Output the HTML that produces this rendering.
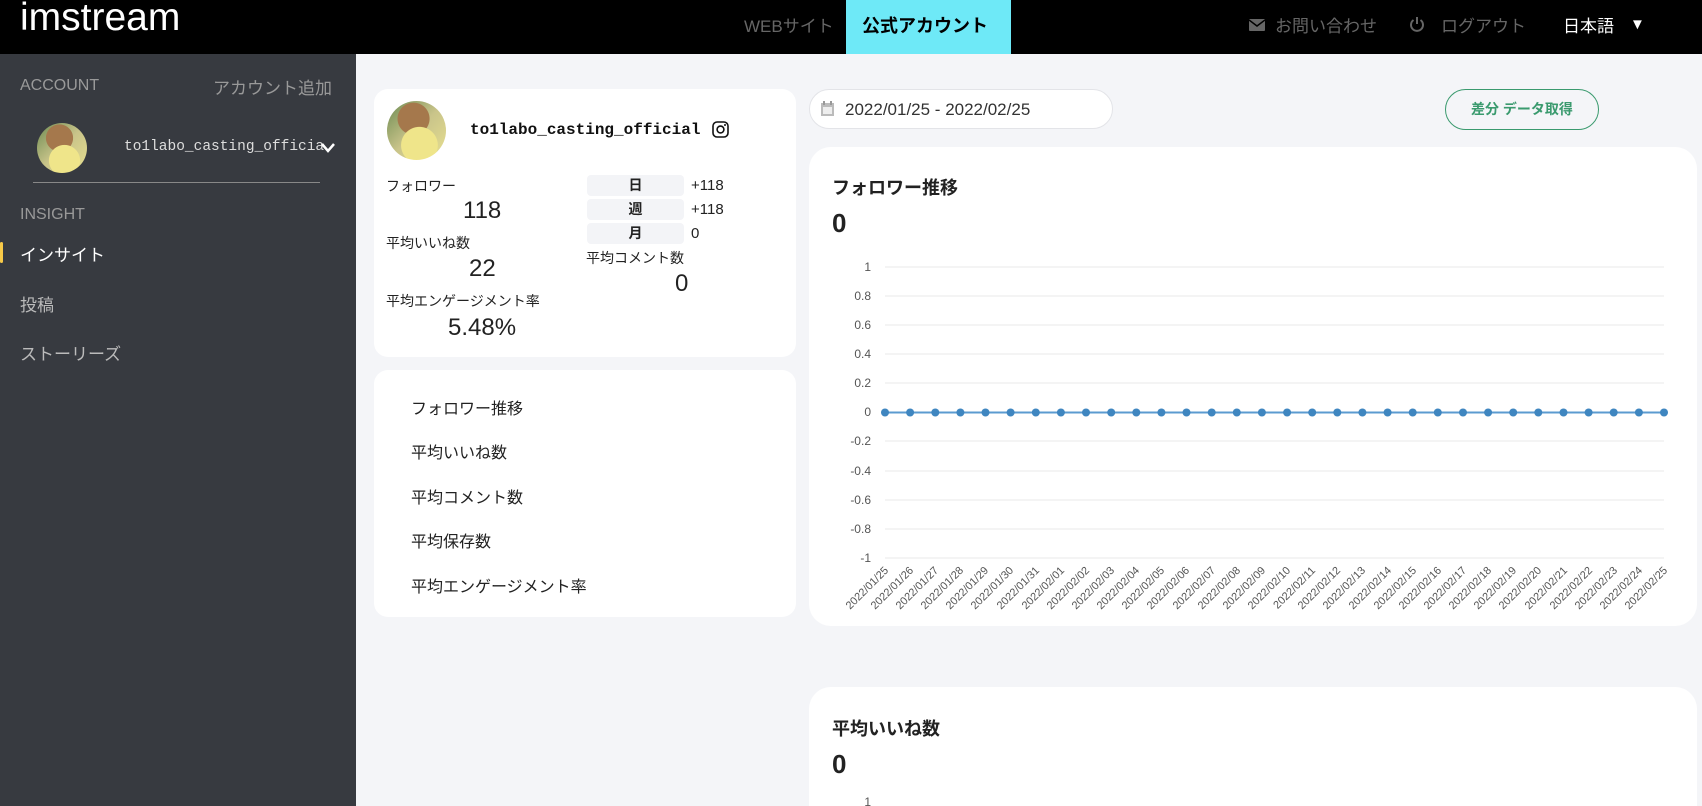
<!DOCTYPE html>
<html style="width:1702px;height:806px;overflow:hidden"><head><meta charset="utf-8">
<style>
*{margin:0;padding:0;box-sizing:border-box}
body{width:1702px;height:806px;overflow:hidden;background:#f4f5f8;font-family:"Liberation Sans","Noto Sans CJK JP",sans-serif;position:relative;color:#222}
.a{position:absolute;white-space:nowrap}
#hdr{left:0;top:0;width:1702px;height:54px;background:#000}
#side{left:0;top:54px;width:356px;height:752px;background:#373a40}
.card{position:absolute;background:#fff;border-radius:14px;overflow:hidden}
.gray{color:#777}
.tb{position:absolute;background:#f3f4f7;border-radius:4px;width:97px;height:21px;text-align:center;font-size:14px;font-weight:bold;line-height:21px}
.av{position:absolute;border-radius:50%;background:radial-gradient(circle at 55% 75%,#efe58a 0 33%,transparent 34%),radial-gradient(circle at 45% 30%,#a5784c 0 30%,transparent 31%),linear-gradient(135deg,#6d8a52,#c9c48a 50%,#e8e090)}
</style></head><body>
<div id="hdr" class="a"></div>
<div class="a" style="left:20px;top:-4px;font-size:39px;color:#fff">imstream</div>
<div class="a" style="left:744px;top:12px;font-size:17px;color:#666">WEBサイト</div>
<div class="a" style="left:846px;top:0;width:165px;height:54px;background:#6ee9f7"></div>
<div class="a" style="left:862px;top:12px;font-size:18px;font-weight:bold;color:#000">公式アカウント</div>
<svg class="a" style="left:1249px;top:17px" width="16" height="16"><rect x="0" y="2" width="16" height="12" rx="1" fill="#666"/><path d="M0 3 L8 9 L16 3" stroke="#000" stroke-width="1.5" fill="none"/></svg>
<div class="a" style="left:1275px;top:12px;font-size:17px;color:#666">お問い合わせ</div>
<svg class="a" style="left:1409px;top:15px" width="16" height="18"><path d="M4.5 5 A6 6 0 1 0 11.5 5" stroke="#666" stroke-width="2" fill="none"/><line x1="8" y1="2" x2="8" y2="9" stroke="#666" stroke-width="2"/></svg>
<div class="a" style="left:1441px;top:12px;font-size:17px;color:#666">ログアウト</div>
<div class="a" style="left:1563px;top:12px;font-size:17px;color:#fff">日本語</div>
<div class="a" style="left:1630px;top:16px;font-size:15px;color:#fff">▼</div>

<div id="side" class="a"></div>
<div class="a" style="left:20px;top:77px;font-size:16px;color:#999">ACCOUNT</div>
<div class="a" style="right:1370px;top:74px;font-size:17px;color:#999">アカウント追加</div>
<div class="av" style="left:37px;top:123px;width:50px;height:50px"></div>
<div class="a" style="left:124px;top:139px;width:200px;overflow:hidden;font-family:'Liberation Mono',monospace;font-size:14.5px;color:#ddd">to1labo_casting_official</div>
<svg class="a" style="left:320px;top:142px" width="16" height="12"><path d="M2 2 L8 9 L14 2" stroke="#fff" stroke-width="2.5" fill="none"/></svg>
<div class="a" style="left:33px;top:182px;width:287px;height:1px;background:#888"></div>
<div class="a" style="left:20px;top:206px;font-size:16px;color:#999">INSIGHT</div>
<div class="a" style="left:0;top:242px;width:3px;height:21px;background:#f7c948;border-radius:2px"></div>
<div class="a" style="left:20px;top:241px;font-size:17px;color:#fff">インサイト</div>
<div class="a" style="left:20px;top:291px;font-size:17px;color:#bbb">投稿</div>
<div class="a" style="left:20px;top:340px;font-size:17px;color:#bbb">ストーリーズ</div>

<div class="card" style="left:374px;top:89px;width:422px;height:268px"></div>
<div class="av" style="left:387px;top:101px;width:59px;height:59px"></div>
<div class="a" style="left:470px;top:121px;font-family:'Liberation Mono',monospace;font-size:16px;font-weight:bold;color:#111">to1labo_casting_official</div>
<svg class="a" style="left:712px;top:121px" width="17" height="17"><rect x="1" y="1" width="15" height="15" rx="4" stroke="#111" stroke-width="1.6" fill="none"/><circle cx="8.5" cy="8.5" r="3.4" stroke="#111" stroke-width="1.6" fill="none"/><circle cx="13" cy="4" r="1" fill="#111"/></svg>
<div class="a" style="left:386px;top:176px;font-size:14px">フォロワー</div>
<div class="a" style="left:463px;top:197px;font-size:24px">118</div>
<div class="a" style="left:386px;top:233px;font-size:14px">平均いいね数</div>
<div class="a" style="left:469px;top:255px;font-size:24px">22</div>
<div class="a" style="left:386px;top:291px;font-size:14px">平均エンゲージメント率</div>
<div class="a" style="left:448px;top:314px;font-size:24px">5.48%</div>
<div class="tb" style="left:587px;top:175px">日</div>
<div class="tb" style="left:587px;top:199px">週</div>
<div class="tb" style="left:587px;top:223px">月</div>
<div class="a" style="left:691px;top:177px;font-size:15px">+118</div>
<div class="a" style="left:691px;top:201px;font-size:15px">+118</div>
<div class="a" style="left:691px;top:225px;font-size:15px">0</div>
<div class="a" style="left:586px;top:248px;font-size:14px">平均コメント数</div>
<div class="a" style="left:675px;top:270px;font-size:24px">0</div>

<div class="card" style="left:374px;top:370px;width:422px;height:247px"></div>
<div class="a" style="left:411px;top:395px;font-size:16px">フォロワー推移</div>
<div class="a" style="left:411px;top:439px;font-size:16px">平均いいね数</div>
<div class="a" style="left:411px;top:484px;font-size:16px">平均コメント数</div>
<div class="a" style="left:411px;top:528px;font-size:16px">平均保存数</div>
<div class="a" style="left:411px;top:573px;font-size:16px">平均エンゲージメント率</div>

<div class="a" style="left:809px;top:89px;width:304px;height:40px;background:#fff;border:1px solid #e3e4e8;border-radius:20px"></div>
<svg class="a" style="left:820px;top:100px" width="15" height="17"><rect x="1" y="3" width="13" height="13" fill="#bbb"/><rect x="3" y="7" width="9" height="7" fill="#eee"/><rect x="3" y="1" width="2" height="4" fill="#999"/><rect x="10" y="1" width="2" height="4" fill="#999"/></svg>
<div class="a" style="left:845px;top:100px;font-size:17px;color:#333">2022/01/25 - 2022/02/25</div>
<div class="a" style="left:1445px;top:89px;width:154px;height:41px;border:1.5px solid #3a9a6e;border-radius:21px;color:#3a9a6e;font-size:14px;font-weight:bold;text-align:center;line-height:38px">差分 データ取得</div>

<div class="card" style="left:809px;top:147px;width:888px;height:479px;border-radius:22px"></div>
<div class="a" style="left:832px;top:174px;font-size:18px;font-weight:bold">フォロワー推移</div>
<div class="a" style="left:832px;top:208px;font-size:26px;font-weight:bold">0</div>
<div class="a" style="left:809px;top:687px;width:888px;height:119px;border-radius:22px 22px 0 0;background:#fff"></div>
<div class="a" style="left:832px;top:715px;font-size:18px;font-weight:bold">平均いいね数</div>
<div class="a" style="left:832px;top:749px;font-size:26px;font-weight:bold">0</div>

<svg class="a" style="left:0;top:0" width="1702" height="806" font-family="Liberation Sans, sans-serif" font-size="12" fill="#555">
<g stroke="#e8e8e8" stroke-width="1">
<line x1="885" y1="267" x2="1664" y2="267"/><line x1="885" y1="296" x2="1664" y2="296"/><line x1="885" y1="325" x2="1664" y2="325"/><line x1="885" y1="354" x2="1664" y2="354"/><line x1="885" y1="383" x2="1664" y2="383"/><line x1="885" y1="441" x2="1664" y2="441"/><line x1="885" y1="471" x2="1664" y2="471"/><line x1="885" y1="500" x2="1664" y2="500"/><line x1="885" y1="529" x2="1664" y2="529"/><line x1="885" y1="558" x2="1664" y2="558"/>
</g>
<g text-anchor="end">
<text x="871" y="271">1</text><text x="871" y="300">0.8</text><text x="871" y="329">0.6</text><text x="871" y="358">0.4</text><text x="871" y="387">0.2</text><text x="871" y="416">0</text><text x="871" y="445">-0.2</text><text x="871" y="475">-0.4</text><text x="871" y="504">-0.6</text><text x="871" y="533">-0.8</text><text x="871" y="562">-1</text>
</g>
<g text-anchor="end" font-size="11">
<text transform="translate(889,571) rotate(-45)">2022/01/25</text><text transform="translate(914,571) rotate(-45)">2022/01/26</text><text transform="translate(939,571) rotate(-45)">2022/01/27</text><text transform="translate(964,571) rotate(-45)">2022/01/28</text><text transform="translate(989,571) rotate(-45)">2022/01/29</text><text transform="translate(1014,571) rotate(-45)">2022/01/30</text><text transform="translate(1040,571) rotate(-45)">2022/01/31</text><text transform="translate(1065,571) rotate(-45)">2022/02/01</text><text transform="translate(1090,571) rotate(-45)">2022/02/02</text><text transform="translate(1115,571) rotate(-45)">2022/02/03</text><text transform="translate(1140,571) rotate(-45)">2022/02/04</text><text transform="translate(1165,571) rotate(-45)">2022/02/05</text><text transform="translate(1190,571) rotate(-45)">2022/02/06</text><text transform="translate(1216,571) rotate(-45)">2022/02/07</text><text transform="translate(1241,571) rotate(-45)">2022/02/08</text><text transform="translate(1266,571) rotate(-45)">2022/02/09</text><text transform="translate(1291,571) rotate(-45)">2022/02/10</text><text transform="translate(1316,571) rotate(-45)">2022/02/11</text><text transform="translate(1341,571) rotate(-45)">2022/02/12</text><text transform="translate(1366,571) rotate(-45)">2022/02/13</text><text transform="translate(1392,571) rotate(-45)">2022/02/14</text><text transform="translate(1417,571) rotate(-45)">2022/02/15</text><text transform="translate(1442,571) rotate(-45)">2022/02/16</text><text transform="translate(1467,571) rotate(-45)">2022/02/17</text><text transform="translate(1492,571) rotate(-45)">2022/02/18</text><text transform="translate(1517,571) rotate(-45)">2022/02/19</text><text transform="translate(1542,571) rotate(-45)">2022/02/20</text><text transform="translate(1568,571) rotate(-45)">2022/02/21</text><text transform="translate(1593,571) rotate(-45)">2022/02/22</text><text transform="translate(1618,571) rotate(-45)">2022/02/23</text><text transform="translate(1643,571) rotate(-45)">2022/02/24</text><text transform="translate(1668,571) rotate(-45)">2022/02/25</text>
</g>
<line x1="885" y1="412.5" x2="1664" y2="412.5" stroke="#5b9bd0" stroke-width="2"/>
<g fill="#3f86c0">
<circle cx="885" cy="412.5" r="4"/><circle cx="910.1" cy="412.5" r="4"/><circle cx="935.3" cy="412.5" r="4"/><circle cx="960.4" cy="412.5" r="4"/><circle cx="985.5" cy="412.5" r="4"/><circle cx="1010.6" cy="412.5" r="4"/><circle cx="1035.8" cy="412.5" r="4"/><circle cx="1060.9" cy="412.5" r="4"/><circle cx="1086" cy="412.5" r="4"/><circle cx="1111.2" cy="412.5" r="4"/><circle cx="1136.3" cy="412.5" r="4"/><circle cx="1161.4" cy="412.5" r="4"/><circle cx="1186.5" cy="412.5" r="4"/><circle cx="1211.7" cy="412.5" r="4"/><circle cx="1236.8" cy="412.5" r="4"/><circle cx="1261.9" cy="412.5" r="4"/><circle cx="1287.1" cy="412.5" r="4"/><circle cx="1312.2" cy="412.5" r="4"/><circle cx="1337.3" cy="412.5" r="4"/><circle cx="1362.4" cy="412.5" r="4"/><circle cx="1387.6" cy="412.5" r="4"/><circle cx="1412.7" cy="412.5" r="4"/><circle cx="1437.8" cy="412.5" r="4"/><circle cx="1463" cy="412.5" r="4"/><circle cx="1488.1" cy="412.5" r="4"/><circle cx="1513.2" cy="412.5" r="4"/><circle cx="1538.3" cy="412.5" r="4"/><circle cx="1563.5" cy="412.5" r="4"/><circle cx="1588.6" cy="412.5" r="4"/><circle cx="1613.7" cy="412.5" r="4"/><circle cx="1638.9" cy="412.5" r="4"/><circle cx="1664" cy="412.5" r="4"/>
</g>
<text x="871" y="806" text-anchor="end">1</text>
</svg>
</body></html>
